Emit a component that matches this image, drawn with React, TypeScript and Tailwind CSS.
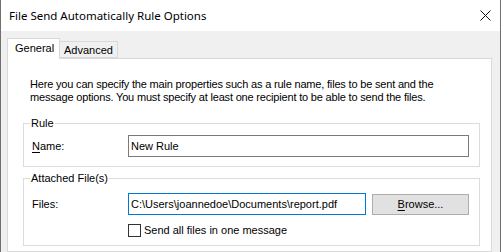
import React from 'react';

const sans = "font-['Liberation_Sans',Arial,sans-serif]";

export default function App() {
  return (
    <div className={`w-[501px] h-[252px] overflow-hidden flex flex-col bg-white border-x border-[#707070] text-black ${sans} text-[11px] leading-[13px]`}>
      {/* Title bar */}
      <div className="h-[31px] flex items-center justify-between pl-[8px] pr-[9px] bg-white shrink-0">
        <span className="font-['Noto_Sans',sans-serif] text-[11.5px] leading-none">File Send Automatically Rule Options</span>
        <svg width="11" height="11" viewBox="0 0 11 11" className="mt-[-1px]">
          <path d="M0.5 0.5 L10.5 10.5 M10.5 0.5 L0.5 10.5" stroke="#111" strokeWidth="1" />
        </svg>
      </div>

      {/* Body */}
      <div className="flex-1 flex flex-col bg-[#f0f0f0] pt-[7px] pl-[6px] pr-[8px]">
        {/* Tabs */}
        <div className="flex items-end">
          <div className="relative z-10 -mb-px h-[21px] w-[53px] bg-white border border-b-0 border-[#d9d9d9] pl-[7px] pt-[3px]">
            General
          </div>
          <div className="h-[17px] w-[58px] bg-[#f0f0f0] border border-l-0 border-[#d9d9d9] pl-[4px] pt-[2px]">
            Advanced
          </div>
        </div>

        {/* Panel */}
        <div className="flex-1 bg-white border border-[#d9d9d9] pt-[19px] pl-[15px] pr-[11px]">
          <p className="pl-[7px] tracking-[-0.18px]">
            Here you can specify the main properties such as a rule name, files to be sent and the
            <br />
            message options. You must specify at least one recipient to be able to send the files.
          </p>

          <fieldset className="mt-[13px] border border-[#dcdcdc] pl-[8px] pr-[10px] pb-[9px]">
            <legend className="-ml-[2px] px-[1px]">Rule</legend>
            <div className="flex items-center pt-[5px]">
              <label className="w-[96px]">
                <u className="underline-offset-[2px]">N</u>ame:
              </label>
              <div className="h-[22px] flex-1 border border-[#7a7a7a] flex items-center pl-[2px]">New Rule</div>
            </div>
          </fieldset>

          <fieldset className="mt-[5px] border border-[#dcdcdc] pl-[8px] pr-[10px] pb-[8px]">
            <legend className="-ml-[2px] px-[1px]">Attached File(s)</legend>
            <div className="flex items-center pt-[8px]">
              <label className="w-[96px]">Files:</label>
              <div className="h-[22px] w-[238px] border border-[#0078d7] flex items-center pl-[2px]">
                C:\Users\joannedoe\Documents\report.pdf
              </div>
              <button className="ml-[6px] h-[21px] flex-1 bg-[#e1e1e1] border border-[#adadad] flex items-center justify-center">
                <span>
                  <u className="underline-offset-[2px]">B</u>rowse...
                </span>
              </button>
            </div>
            <div className="flex items-center mt-[9px] pl-[96px]">
              <span className="w-[13px] h-[13px] border border-[#333] bg-white"></span>
              <span className="ml-[3px]">Send all files in one message</span>
            </div>
          </fieldset>
        </div>
      </div>
    </div>
  );
}
